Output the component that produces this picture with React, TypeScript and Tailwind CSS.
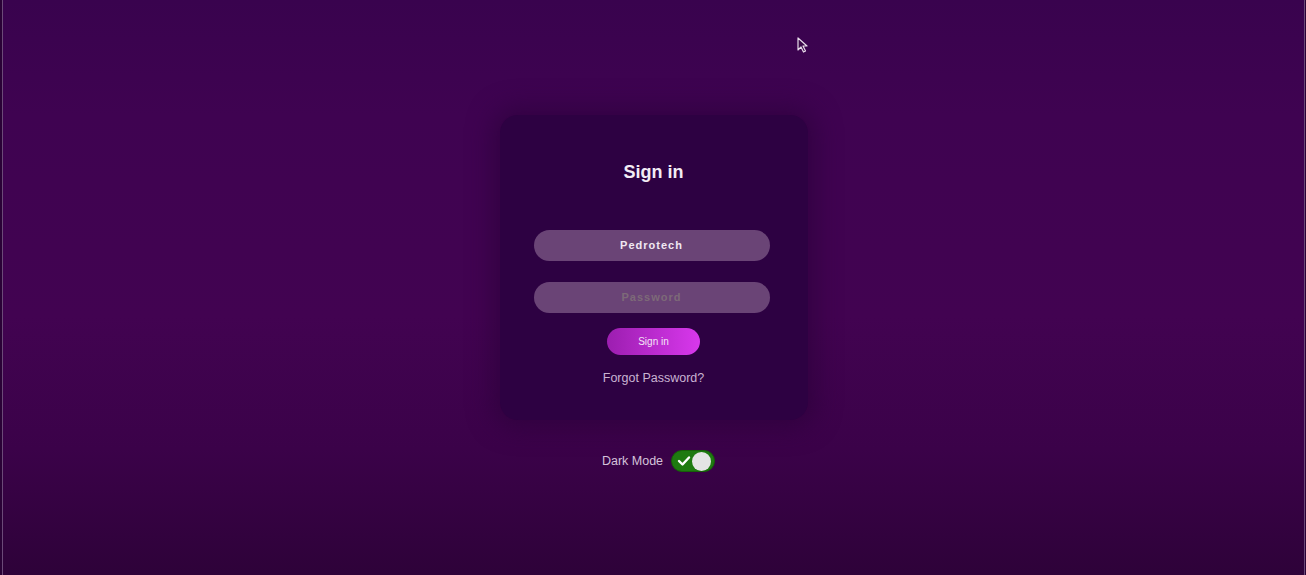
import React from "react";

export default function App() {
  return (
    <div
      className="h-[575px] w-[1306px] overflow-hidden flex bg-[linear-gradient(180deg,#39034e_0%,#3f0351_20%,#420351_55%,#3b0249_78%,#2e0239_100%)]"
      style={{ fontFamily: '"Liberation Sans", Arial, sans-serif' }}
    >
      <div className="w-[2px] bg-[#2a0236]" />
      <div className="w-[1px] bg-[#6b4a78]" />
      <div className="relative flex-1 flex flex-col items-center">
        <svg className="absolute left-[793px] top-[37px]" width="14" height="16" viewBox="0 0 14 16">
          <path d="M2 1 L2 13 L5 10 L7.5 15 L9.5 14 L7 9 L11 9 Z" fill="#3b0a4a" stroke="#e8dcea" strokeWidth="1.2" strokeLinejoin="round" />
        </svg>
        <div className="mt-[115px] w-[308px] h-[305px] rounded-[18px] bg-[#2d0142] shadow-[0_0_24px_8px_rgba(40,0,55,0.55)] flex flex-col items-center">
          <h1 className="mt-[46px] text-[18px] font-bold text-[#f2ecf4] leading-[22px]">Sign in</h1>
          <div className="mt-[47px] mr-[4px] w-[236px] h-[31px] rounded-full bg-[#6a4476] flex items-center justify-center text-[11px] font-bold tracking-[1px] text-[#f0e8f2]">
            Pedrotech
          </div>
          <div className="mt-[21px] mr-[4px] w-[236px] h-[31px] rounded-full bg-[#6a4476] flex items-center justify-center text-[11px] font-bold tracking-[1px] text-[#7d6a78]">
            Password
          </div>
          <div className="mt-[15px] w-[93px] h-[27px] rounded-full bg-[linear-gradient(90deg,#9c1eb0,#d838ec)] flex items-center justify-center text-[10px] text-[#f4e4f6]">
            Sign in
          </div>
          <div className="mt-[14px] text-[12.5px] text-[#c9b3d2]">Forgot Password?</div>
        </div>
        <div className="mt-[30px] ml-[10px] flex items-center gap-[8px]">
          <span className="text-[12.5px] text-[#d4c2da]">Dark Mode</span>
          <div className="w-[44px] h-[22px] rounded-full bg-[#1e7a10] flex items-center justify-between px-[3px] border border-[#166008]">
            <svg width="14" height="12" viewBox="0 0 14 12" className="ml-[2px]">
              <path d="M2 6 L5.5 9.5 L12 2.5" fill="none" stroke="#ffffff" strokeWidth="2.4" strokeLinecap="round" strokeLinejoin="round" />
            </svg>
            <div className="w-[19px] h-[19px] rounded-full bg-[#e4e4e4]" />
          </div>
        </div>
      </div>
      <div className="w-[1px] bg-[#6b4a78]" />
      <div className="w-[1px] bg-[#2a0236]" />
    </div>
  );
}
